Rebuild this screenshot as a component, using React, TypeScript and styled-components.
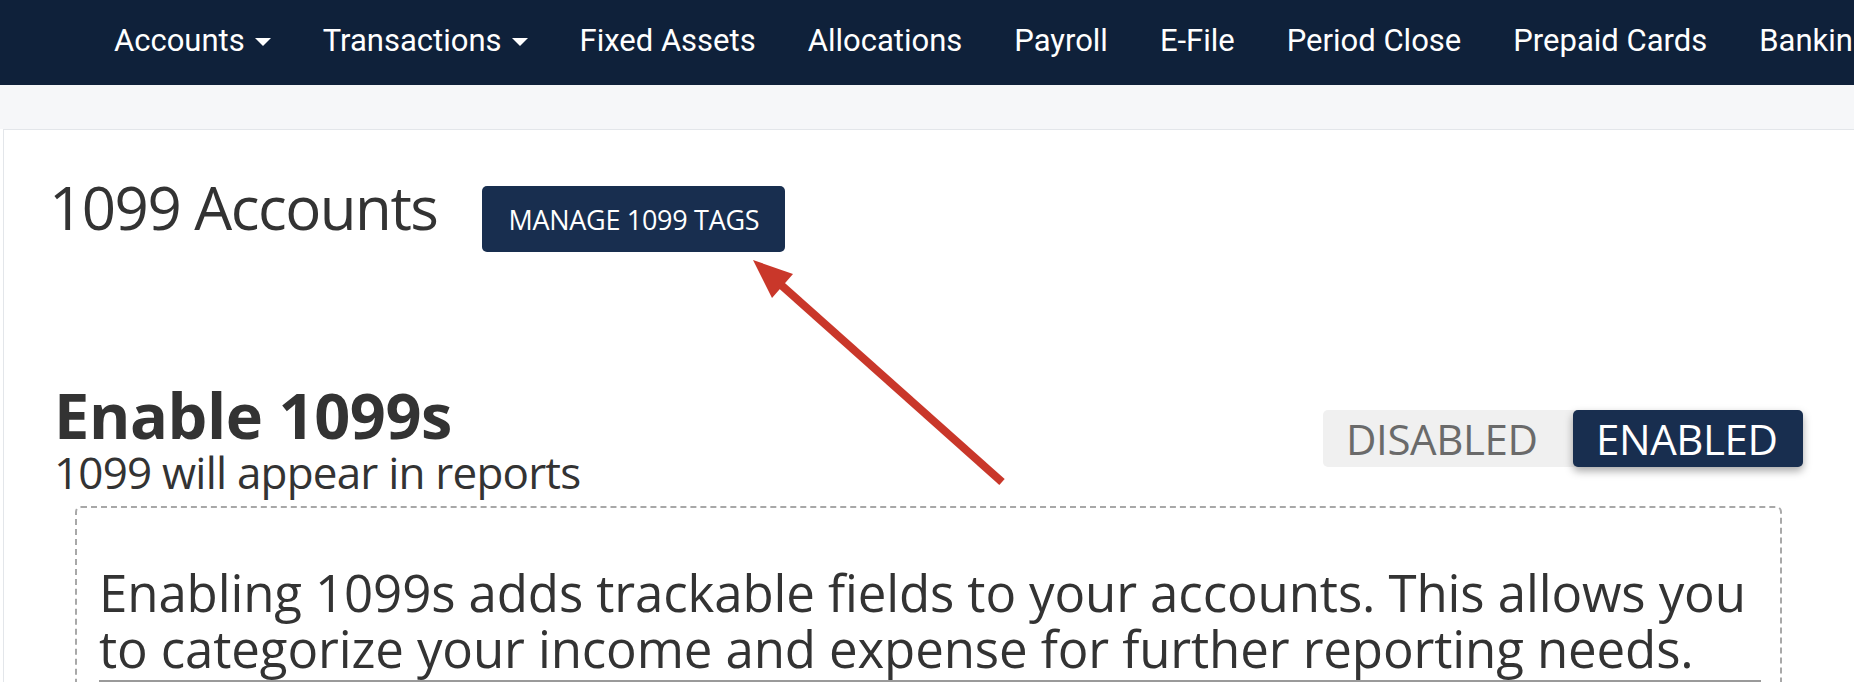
import React from "react";
import styled, { createGlobalStyle } from "styled-components";

const Global = createGlobalStyle`
  html, body { margin: 0; padding: 0; background: #ffffff; }
  body { font-family: "Open Sans", "Liberation Sans", sans-serif; color: #333333; overflow: hidden; }
  * { box-sizing: border-box; }
`;

const Page = styled.div`
  position: relative;
  width: 1854px;
  height: 682px;
  overflow: hidden;
  background: #ffffff;
`;

const NavBar = styled.nav`
  height: 85px;
  background: #0f213a;
  display: flex;
  align-items: center;
  padding: 0 0 5px 88px;
  white-space: nowrap;
  overflow: hidden;
`;

const NavItem = styled.div`
  display: flex;
  align-items: center;
  padding: 0 26px;
  font-family: Roboto, "Liberation Sans", sans-serif;
  font-size: 31px;
  color: #ffffff;
`;

const Caret = styled.span`
  display: inline-block;
  width: 0;
  height: 0;
  margin: 3px 0 0 10px;
  border-left: 8px solid transparent;
  border-right: 8px solid transparent;
  border-top: 8px solid #ffffff;
`;

const Band = styled.div`
  height: 44px;
  background: #f6f7f9;
`;

const Card = styled.div`
  margin-left: 3px;
  border-top: 1px solid #e3e6ea;
  border-left: 1px solid #e3e6ea;
  background: #ffffff;
  padding: 47px 51px 0 45px;
`;

const TitleRow = styled.div`
  display: flex;
  align-items: flex-start;
`;

const PageTitle = styled.h1`
  margin: 0;
  font-size: 60px;
  line-height: 60px;
  font-weight: 400;
  letter-spacing: -1.5px;
  color: #333333;
`;

const PrimaryButton = styled.button`
  margin: 9px 0 0 45px;
  height: 66px;
  width: 303px;
  border: none;
  border-radius: 5px;
  background: #182e4f;
  color: #ffffff;
  font-family: "Open Sans", "Liberation Sans", sans-serif;
  font-size: 27px;
  letter-spacing: -0.3px;
  text-transform: uppercase;
  padding: 0;
`;

const Section = styled.div`
  margin-top: 131px;
  padding-left: 5px;
  display: flex;
  align-items: flex-start;
  justify-content: space-between;
`;

const SectionHead = styled.div`
  display: flex;
  flex-direction: column;
`;

const SectionTitle = styled.h2`
  margin: 0;
  font-size: 63px;
  line-height: 64px;
  font-weight: 700;
  letter-spacing: -0.4px;
  color: #333333;
`;

const SectionSub = styled.div`
  font-size: 44px;
  line-height: 50px;
  letter-spacing: -0.8px;
  color: #333333;
`;

const Toggle = styled.div`
  margin-top: 27px;
  display: flex;
  height: 57px;
  background: #f0f0f0;
  border-radius: 5px;
`;

const ToggleOption = styled.div<{ $active?: boolean; $w: number }>`
  width: ${(p) => p.$w}px;
  height: 57px;
  display: flex;
  align-items: center;
  padding-left: 23px;
  font-size: 42px;
  letter-spacing: -0.4px;
  border-radius: 5px;
  color: ${(p) => (p.$active ? "#ffffff" : "#6a6a6a")};
  background: ${(p) => (p.$active ? "#182e4f" : "transparent")};
  box-shadow: ${(p) => (p.$active ? "0 4px 9px rgba(0,0,0,0.35)" : "none")};
`;

const DashedBox = styled.div`
  margin: 9px 21px 0 26px;
  border: 2px dashed #a8a8a8;
  border-radius: 6px;
  padding: 56px 19px 0 22px;
  height: 300px;
`;

const Description = styled.p`
  margin: 0;
  font-size: 51px;
  line-height: 56px;
  letter-spacing: -0.12px;
  color: #333333;
  padding-bottom: 4px;
  border-bottom: 3px solid #9a9a9a;
`;

const Annotation = styled.svg`
  position: absolute;
  left: 0;
  top: 0;
  pointer-events: none;
`;

const navItems: { label: string; dropdown?: boolean }[] = [
  { label: "Accounts", dropdown: true },
  { label: "Transactions", dropdown: true },
  { label: "Fixed Assets" },
  { label: "Allocations" },
  { label: "Payroll" },
  { label: "E-File" },
  { label: "Period Close" },
  { label: "Prepaid Cards" },
  { label: "Banking" },
];

export default function App() {
  return (
    <Page>
      <Global />
      <NavBar>
        {navItems.map((n) => (
          <NavItem key={n.label}>
            {n.label}
            {n.dropdown && <Caret />}
          </NavItem>
        ))}
      </NavBar>
      <Band />
      <Card>
        <TitleRow>
          <PageTitle>1099 Accounts</PageTitle>
          <PrimaryButton>Manage 1099 Tags</PrimaryButton>
        </TitleRow>
        <Section>
          <SectionHead>
            <SectionTitle>Enable 1099s</SectionTitle>
            <SectionSub>1099 will appear in reports</SectionSub>
          </SectionHead>
          <Toggle>
            <ToggleOption $w={250}>DISABLED</ToggleOption>
            <ToggleOption $w={230} $active>
              ENABLED
            </ToggleOption>
          </Toggle>
        </Section>
        <DashedBox>
          <Description>
            Enabling 1099s adds trackable fields to your accounts. This allows you to categorize your
            income and expense for further reporting needs.
          </Description>
        </DashedBox>
      </Card>
      <Annotation width="1854" height="682" viewBox="0 0 1854 682">
        <line x1="1002" y1="482" x2="780" y2="284" stroke="#c9372a" strokeWidth="8" />
        <polygon points="753,260 793,274 772,298" fill="#c9372a" />
      </Annotation>
    </Page>
  );
}
